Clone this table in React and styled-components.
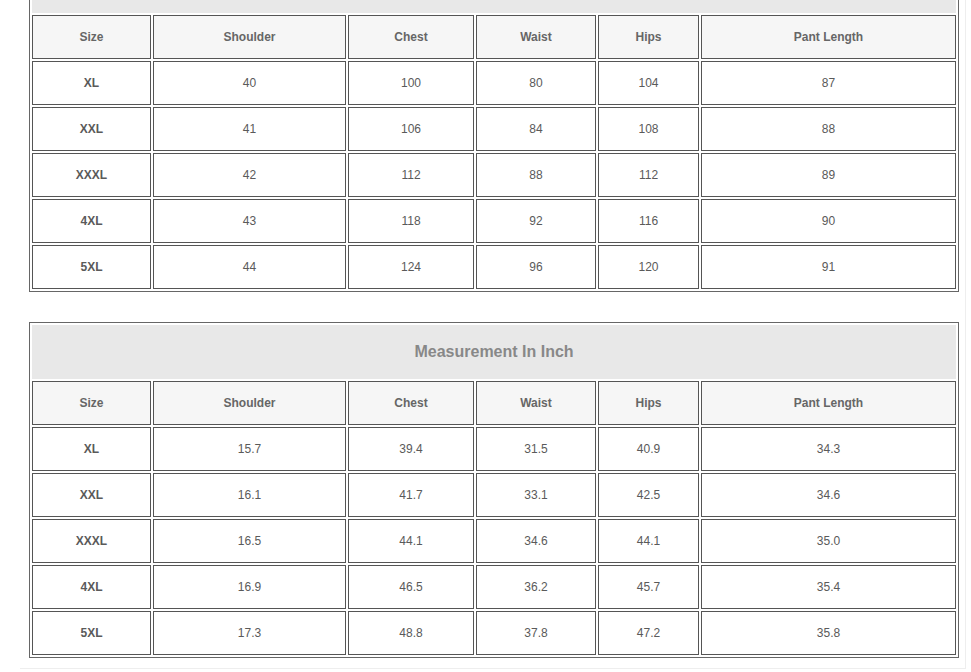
import React from 'react'
import styled, { createGlobalStyle } from 'styled-components'

const GlobalStyle = createGlobalStyle`
  html, body {
    margin: 0;
    padding: 0;
    background: #fff;
    font-family: "Liberation Sans", Arial, sans-serif;
  }
`

// the page is scrolled so the first chart's title sits above the fold
const Page = styled.div`
  margin-top: -44px;
  margin-left: 20px;
  width: 946px;
  padding: 0 0 10px 9px;
  box-sizing: border-box;
  border-right: 1px solid #eeeeee;
  border-bottom: 1px solid #eeeeee;
  display: flex;
  flex-direction: column;
  gap: 30px;
`

const Chart = styled.table`
  width: 930px;
  box-sizing: border-box;
  table-layout: fixed;
  border-collapse: separate;
  border-spacing: 2px;
  border: 1px solid #666;
`

const Col = styled.col`
  width: ${p => p.$w}px;
`

const Title = styled.th`
  height: 54px;
  box-sizing: border-box;
  background: #e8e8e8;
  border: 1px solid #e8e8e8;
  color: #888;
  font-size: 16px;
  font-weight: bold;
  text-align: center;
  vertical-align: middle;
`

const Cell = styled.td`
  height: 44px;
  box-sizing: border-box;
  padding: 0;
  border: 1px solid #555;
  background: ${p => (p.$head ? '#f6f6f6' : '#fff')};
  color: ${p => (p.$head ? '#666' : '#5a5a5a')};
  font-size: 12px;
  font-weight: ${p => (p.$bold ? 'bold' : 'normal')};
  text-align: center;
  vertical-align: middle;
`

const widths = [119, 193, 126, 120, 101, 255]
const heads = ['Size', 'Shoulder', 'Chest', 'Waist', 'Hips', 'Pant Length']
const sizes = ['XL', 'XXL', 'XXXL', '4XL', '5XL']

const cm = [
  [40, 100, 80, 104, 87],
  [41, 106, 84, 108, 88],
  [42, 112, 88, 112, 89],
  [43, 118, 92, 116, 90],
  [44, 124, 96, 120, 91],
]

const inch = [
  ['15.7', '39.4', '31.5', '40.9', '34.3'],
  ['16.1', '41.7', '33.1', '42.5', '34.6'],
  ['16.5', '44.1', '34.6', '44.1', '35.0'],
  ['16.9', '46.5', '36.2', '45.7', '35.4'],
  ['17.3', '48.8', '37.8', '47.2', '35.8'],
]

const SizeChart = ({ title, rows }) => (
  <Chart>
    <colgroup>
      {widths.map((w, i) => (
        <Col key={i} $w={w} />
      ))}
    </colgroup>
    <tbody>
      <tr>
        <Title colSpan={6}>{title}</Title>
      </tr>
      <tr>
        {heads.map(h => (
          <Cell as='th' key={h} $head $bold>
            {h}
          </Cell>
        ))}
      </tr>
      {rows.map((r, i) => (
        <tr key={sizes[i]}>
          <Cell $bold>{sizes[i]}</Cell>
          {r.map((v, j) => (
            <Cell key={j}>{v}</Cell>
          ))}
        </tr>
      ))}
    </tbody>
  </Chart>
)

export default function App() {
  return (
    <>
      <GlobalStyle />
      <Page>
        <SizeChart title='Measurement In CM' rows={cm} />
        <SizeChart title='Measurement In Inch' rows={inch} />
      </Page>
    </>
  )
}
